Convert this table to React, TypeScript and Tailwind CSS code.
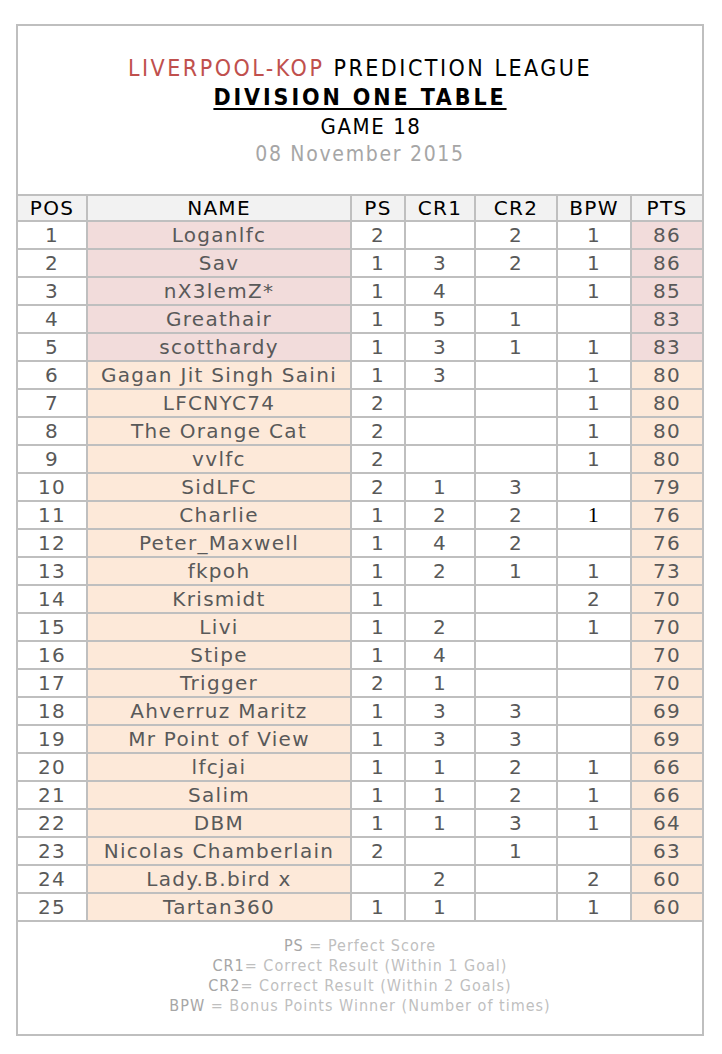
const ROWS: [number, string, string, string, string, string, number][] = [
  [1, "Loganlfc", "2", "", "2", "1", 86],
  [2, "Sav", "1", "3", "2", "1", 86],
  [3, "nX3lemZ*", "1", "4", "", "1", 85],
  [4, "Greathair", "1", "5", "1", "", 83],
  [5, "scotthardy", "1", "3", "1", "1", 83],
  [6, "Gagan Jit Singh Saini", "1", "3", "", "1", 80],
  [7, "LFCNYC74", "2", "", "", "1", 80],
  [8, "The Orange Cat", "2", "", "", "1", 80],
  [9, "vvlfc", "2", "", "", "1", 80],
  [10, "SidLFC", "2", "1", "3", "", 79],
  [11, "Charlie", "1", "2", "2", "1", 76],
  [12, "Peter_Maxwell", "1", "4", "2", "", 76],
  [13, "fkpoh", "1", "2", "1", "1", 73],
  [14, "Krismidt", "1", "", "", "2", 70],
  [15, "Livi", "1", "2", "", "1", 70],
  [16, "Stipe", "1", "4", "", "", 70],
  [17, "Trigger", "2", "1", "", "", 70],
  [18, "Ahverruz Maritz", "1", "3", "3", "", 69],
  [19, "Mr Point of View", "1", "3", "3", "", 69],
  [20, "lfcjai", "1", "1", "2", "1", 66],
  [21, "Salim", "1", "1", "2", "1", 66],
  [22, "DBM", "1", "1", "3", "1", 64],
  [23, "Nicolas Chamberlain", "2", "", "1", "", 63],
  [24, "Lady.B.bird x", "", "2", "", "2", 60],
  [25, "Tartan360", "1", "1", "", "1", 60],
];

const HEADERS = ["POS", "NAME", "PS", "CR1", "CR2", "BPW", "PTS"];

const LEGEND = [
  ["PS", " = Perfect Score"],
  ["CR1", "= Correct Result (Within 1 Goal)"],
  ["CR2", "= Correct Result (Within 2 Goals)"],
  ["BPW", " = Bonus Points Winner (Number of times)"],
];

export default function App() {
  return (
    <div className="min-h-[1054px] bg-white pt-[24px] pl-[16px]">
      <div className="w-[688px] border-2 border-[#bfbfbf] bg-[#bfbfbf] flex flex-col gap-[2px]">
        {/* Title */}
        <div
          className="h-[168px] bg-white flex flex-col items-center pt-[28px] text-[23px] leading-[29px]"
          style={{ fontFamily: "'DejaVu Sans Condensed', 'DejaVu Sans', sans-serif" }}
        >
          <div className="text-black tracking-[2.5px]">
            <span className="text-[#c0504d]">LIVERPOOL-KOP</span> PREDICTION LEAGUE
          </div>
          <div className="font-bold underline underline-offset-[3px] decoration-2 text-black tracking-[2.9px]">
            DIVISION ONE TABLE
          </div>
          <div className="pl-[22px] text-[22px] text-black tracking-[1.6px]">GAME 18</div>
          <div className="text-[21px] leading-[26px] text-[#a6a6a6] tracking-[1.7px]">08 November 2015</div>
        </div>

        {/* Table */}
        <div
          className="grid grid-cols-[68px_262px_52px_68px_80px_72px_70px] gap-[2px] text-[20px] tracking-[1.3px]"
          style={{ fontFamily: "'DejaVu Sans', Verdana, sans-serif" }}
        >
          {HEADERS.map((h) => (
            <div key={h} className="h-[24px] bg-[#f2f2f2] text-black flex items-center justify-center leading-none">
              {h}
            </div>
          ))}
          {ROWS.map(([pos, name, ps, cr1, cr2, bpw, pts]) => {
            const fill = pos <= 5 ? "bg-[#f2dcdb]" : "bg-[#fde9d9]";
            const cell = "h-[26px] flex items-center justify-center leading-none text-[#595959]";
            return [
              <div key={pos + "p"} className={`${cell} bg-white`}>{pos}</div>,
              <div key={pos + "n"} className={`${cell} ${fill}`}>{name}</div>,
              <div key={pos + "s"} className={`${cell} bg-white`}>{ps}</div>,
              <div key={pos + "1"} className={`${cell} bg-white`}>{cr1}</div>,
              <div key={pos + "2"} className={`${cell} bg-white`}>{cr2}</div>,
              <div key={pos + "b"} className={`${cell} bg-white`}>
                {pos === 11 ? (
                  <span className="text-black text-[22px]" style={{ fontFamily: "'Liberation Serif', serif" }}>
                    {bpw}
                  </span>
                ) : (
                  bpw
                )}
              </div>,
              <div key={pos + "t"} className={`${cell} ${fill}`}>{pts}</div>,
            ];
          })}
        </div>

        {/* Legend */}
        <div
          className="h-[112px] bg-white flex flex-col items-center pt-[14px] text-[16px] leading-[20px] text-[#bfbfbf] tracking-[1px]"
          style={{ fontFamily: "'DejaVu Sans Condensed', 'DejaVu Sans', sans-serif" }}
        >
          {LEGEND.map(([abbr, rest]) => (
            <div key={abbr} className="whitespace-pre">
              <span className="text-[#a6a6a6]">{abbr}</span>
              {rest}
            </div>
          ))}
        </div>
      </div>
    </div>
  );
}
